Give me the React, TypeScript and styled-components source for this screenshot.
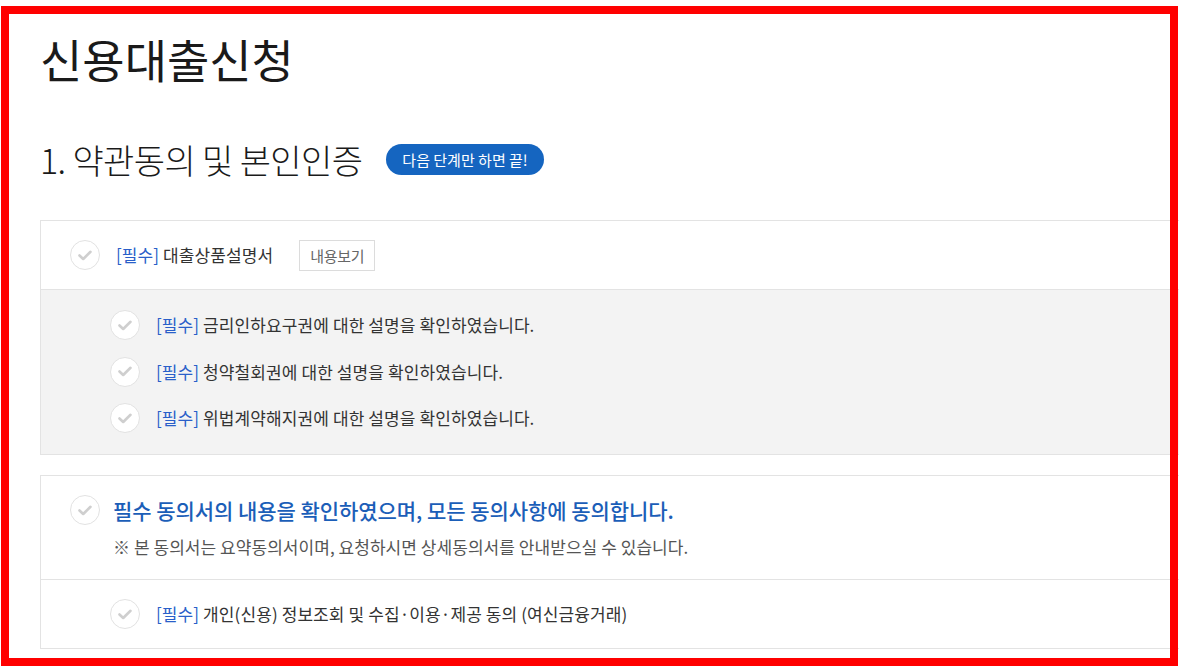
import React from "react";
import styled, { createGlobalStyle } from "styled-components";

const GlobalStyle = createGlobalStyle`
  html, body { margin: 0; padding: 0; background: #fff; overflow: hidden; }
  body {
    font-family: "Noto Sans CJK KR", "Noto Sans", sans-serif;
    color: #222;
    width: 1179px;
    height: 668px;
  }
`;

const Page = styled.div`
  padding: 28px 0 0 40px;
  width: 1200px;
`;

const Frame = styled.div`
  position: fixed;
  left: 1px;
  top: 6px;
  width: 1177px;
  height: 660px;
  box-sizing: border-box;
  border: 8px solid #ff0000;
  pointer-events: none;
  z-index: 10;
`;

const Title = styled.h1`
  margin: 0;
  font-size: 46px;
  font-weight: 400;
  line-height: 60px;
  letter-spacing: 0;
  color: #1a1a1a;
`;

const SectionHead = styled.div`
  display: flex;
  align-items: center;
  gap: 24px;
  margin-top: 50px;
  height: 44px;
`;

const SectionTitle = styled.h2`
  margin: 0;
  font-size: 34px;
  font-weight: 300;
  line-height: 44px;
  letter-spacing: -0.6px;
  color: #1a1a1a;
`;

const Badge = styled.span`
  display: inline-flex;
  align-items: center;
  height: 31px;
  padding: 0 16px;
  border-radius: 16px;
  background: #1565c0;
  color: #fff;
  font-size: 15px;
  letter-spacing: 0;
  margin-top: -2px;
`;

const Box = styled.div<{ $gap?: number }>`
  margin-top: ${(p) => p.$gap ?? 0}px;
  border: 1px solid #e3e3e3;
  border-right: none;
  border-bottom: none;
`;

const Row = styled.div<{ $h: number }>`
  display: flex;
  flex-direction: column;
  justify-content: center;
  height: ${(p) => p.$h}px;
  box-sizing: border-box;
  background: #fff;
  border-bottom: 1px solid #e3e3e3;
`;

const AgreeRow = styled.div`
  display: flex;
  flex-direction: column;
  padding: 19px 0 22px;
  background: #fff;
  border-bottom: 1px solid #e3e3e3;
`;

const GreyList = styled.div`
  display: flex;
  flex-direction: column;
  gap: 16.5px;
  padding: 20px 0 21px 69px;
  background: #f3f3f3;
  border-bottom: 1px solid #e3e3e3;
`;

const Item = styled.div<{ $indent?: number; $gap?: number }>`
  display: flex;
  align-items: center;
  height: 30px;
  padding-left: ${(p) => p.$indent ?? 0}px;
  gap: ${(p) => p.$gap ?? 16}px;
`;

const Circle = styled.span`
  flex: none;
  width: 30px;
  height: 30px;
  box-sizing: border-box;
  border-radius: 50%;
  border: 1.5px solid #e2e2e2;
  background: #fff;
  display: flex;
  align-items: center;
  justify-content: center;
`;

const Label = styled.span`
  font-size: 17px;
  letter-spacing: 0.1px;
  color: #333;
  line-height: 22px;
`;

const Req = styled.span`
  color: #2a5fc9;
`;

const ViewBtn = styled.button`
  margin-left: 10px;
  height: 31px;
  padding: 0 10px;
  border: 1px solid #dcdcdc;
  background: #fff;
  color: #666;
  font-family: inherit;
  font-size: 15px;
  letter-spacing: -0.3px;
`;

const Strong = styled.span`
  font-size: 21px;
  font-weight: 500;
  letter-spacing: -0.05px;
  color: #1b5eb8;
  line-height: 28px;
`;

const Note = styled.div`
  margin: 12px 0 0 72px;
  font-size: 17px;
  letter-spacing: 0.05px;
  color: #555;
  line-height: 20px;
`;

const Check = () => (
  <Circle>
    <svg width="14" height="11" viewBox="0 0 14 11">
      <path d="M1.5 5.5 L5.2 9 L12.5 1.8" fill="none" stroke="#cfcfcf" strokeWidth="2.6" strokeLinecap="round" strokeLinejoin="round" />
    </svg>
  </Circle>
);

const subItems = [
  "금리인하요구권에 대한 설명을 확인하였습니다.",
  "청약철회권에 대한 설명을 확인하였습니다.",
  "위법계약해지권에 대한 설명을 확인하였습니다.",
];

export default function App() {
  return (
    <>
      <GlobalStyle />
      <Frame />
      <Page>
        <Title>신용대출신청</Title>
        <SectionHead>
          <SectionTitle>1. 약관동의 및 본인인증</SectionTitle>
          <Badge>다음 단계만 하면 끝!</Badge>
        </SectionHead>

        <Box $gap={38}>
          <Row $h={69}>
            <Item $indent={29}>
              <Check />
              <Label>
                <Req>[필수]</Req> 대출상품설명서
              </Label>
              <ViewBtn>내용보기</ViewBtn>
            </Item>
          </Row>
          <GreyList>
            {subItems.map((t) => (
              <Item key={t}>
                <Check />
                <Label>
                  <Req>[필수]</Req> {t}
                </Label>
              </Item>
            ))}
          </GreyList>
        </Box>

        <Box $gap={20}>
          <AgreeRow>
            <Item $indent={29} $gap={13}>
              <Check />
              <Strong>필수 동의서의 내용을 확인하였으며, 모든 동의사항에 동의합니다.</Strong>
            </Item>
            <Note>※ 본 동의서는 요약동의서이며, 요청하시면 상세동의서를 안내받으실 수 있습니다.</Note>
          </AgreeRow>
          <Row $h={69}>
            <Item $indent={69}>
              <Check />
              <Label>
                <Req>[필수]</Req> 개인(신용) 정보조회 및 수집·이용·제공 동의 (여신금융거래)
              </Label>
            </Item>
          </Row>
        </Box>
      </Page>
    </>
  );
}
